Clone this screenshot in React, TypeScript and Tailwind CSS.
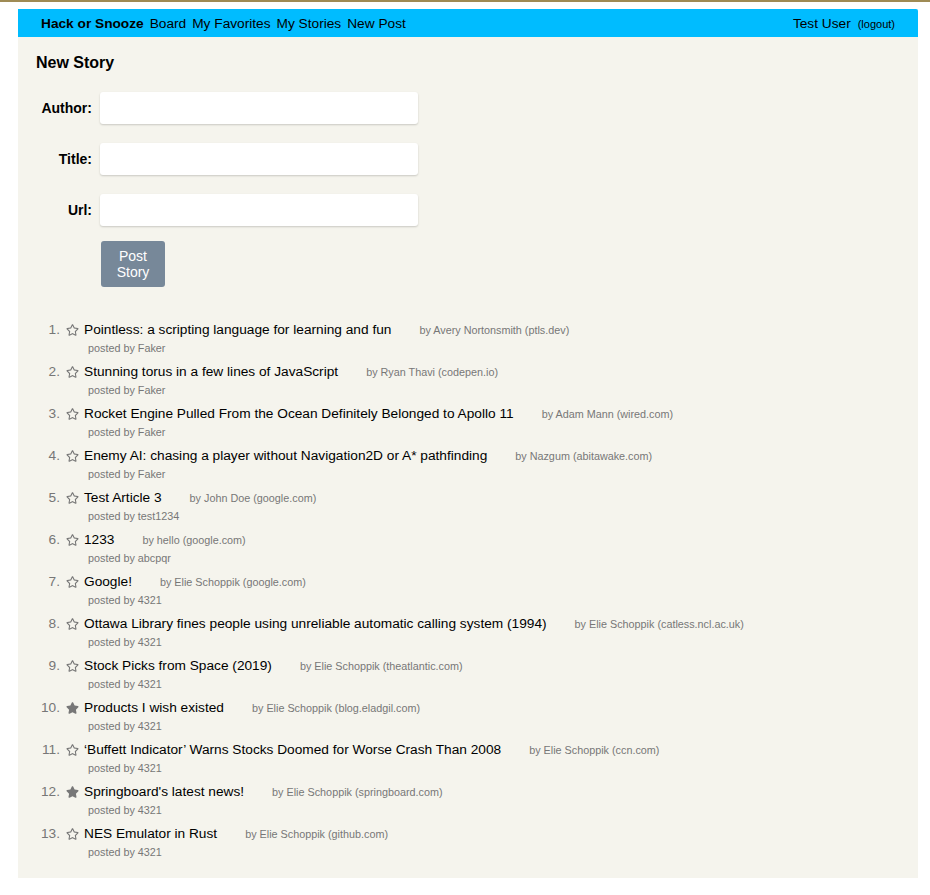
import { FaRegStar, FaStar } from "react-icons/fa";

type Story = {
  title: string;
  author: string;
  host: string;
  user: string;
  fav?: boolean;
};

const stories: Story[] = [
  { title: "Pointless: a scripting language for learning and fun", author: "Avery Nortonsmith", host: "ptls.dev", user: "Faker" },
  { title: "Stunning torus in a few lines of JavaScript", author: "Ryan Thavi", host: "codepen.io", user: "Faker" },
  { title: "Rocket Engine Pulled From the Ocean Definitely Belonged to Apollo 11", author: "Adam Mann", host: "wired.com", user: "Faker" },
  { title: "Enemy AI: chasing a player without Navigation2D or A* pathfinding", author: "Nazgum", host: "abitawake.com", user: "Faker" },
  { title: "Test Article 3", author: "John Doe", host: "google.com", user: "test1234" },
  { title: "1233", author: "hello", host: "google.com", user: "abcpqr" },
  { title: "Google!", author: "Elie Schoppik", host: "google.com", user: "4321" },
  { title: "Ottawa Library fines people using unreliable automatic calling system (1994)", author: "Elie Schoppik", host: "catless.ncl.ac.uk", user: "4321" },
  { title: "Stock Picks from Space (2019)", author: "Elie Schoppik", host: "theatlantic.com", user: "4321" },
  { title: "Products I wish existed", author: "Elie Schoppik", host: "blog.eladgil.com", user: "4321", fav: true },
  { title: "\u2018Buffett Indicator\u2019 Warns Stocks Doomed for Worse Crash Than 2008", author: "Elie Schoppik", host: "ccn.com", user: "4321" },
  { title: "Springboard's latest news!", author: "Elie Schoppik", host: "springboard.com", user: "4321", fav: true },
  { title: "NES Emulator in Rust", author: "Elie Schoppik", host: "github.com", user: "4321" },
];

const fields = ["Author", "Title", "Url"];

export default function App() {
  return (
    <div className="min-h-[895px] bg-white font-['Liberation_Sans',Arial,sans-serif] text-[14px] text-black">
      <div className="h-[2px] bg-[#9f8b55]" />
      <div className="ml-[18px] mt-[7px] w-[900px] bg-[#f5f4ed] pb-[19px]">
        {/* Nav */}
        <nav className="flex h-[28px] items-center justify-between rounded-tr-[2px] bg-[#00bcff] px-[23px] pt-[2px] text-[13.7px]">
          <div className="flex items-center gap-[6px]">
            <span className="font-bold">Hack or Snooze</span>
            <span>Board</span>
            <span>My Favorites</span>
            <span>My Stories</span>
            <span>New Post</span>
          </div>
          <div className="flex items-baseline gap-[7px]">
            <span>Test User</span>
            <span className="text-[11px]">(logout)</span>
          </div>
        </nav>

        {/* New story form */}
        <section className="px-[18px] pt-[16px]">
          <h2 className="text-[16px] font-bold leading-5">New Story</h2>
          <form className="mt-[19px] flex flex-col gap-[19px]">
            {fields.map(f => (
              <div key={f} className="flex items-center gap-[8px]">
                <label className="w-[56px] text-right font-bold">{f}:</label>
                <input className="h-[32px] w-[318px] rounded-[3px] bg-white shadow-[0_1px_2px_rgba(0,0,0,0.18)] outline-none" />
              </div>
            ))}
          </form>
          <button className="ml-[65px] mt-[15px] h-[46px] w-[64px] rounded-[3px] bg-[#778899] px-[12px] leading-[16px] text-white">
            Post Story
          </button>
        </section>

        {/* Stories */}
        <ol className="mt-[33px] flex flex-col gap-[7px] text-[13.7px]">
          {stories.map((s, i) => (
            <li key={i} className="flex flex-col">
              <div className="flex h-[20px] items-center">
                <span className="w-[42px] text-right text-[#777]">{i + 1}.</span>
                <span className="ml-[6px] flex w-[13px] justify-center text-[#777]">
                  {s.fav ? <FaStar size={14} /> : <FaRegStar size={14} />}
                </span>
                <span className="ml-[5px]">{s.title}</span>
                <span className="ml-[28px] text-[10.8px] text-[#777]">
                  by {s.author} ({s.host})
                </span>
              </div>
              <div className="mt-[1px] h-[14px] pl-[70px] text-[10.8px] leading-[14px] text-[#777]">
                posted by {s.user}
              </div>
            </li>
          ))}
        </ol>
      </div>
    </div>
  );
}
